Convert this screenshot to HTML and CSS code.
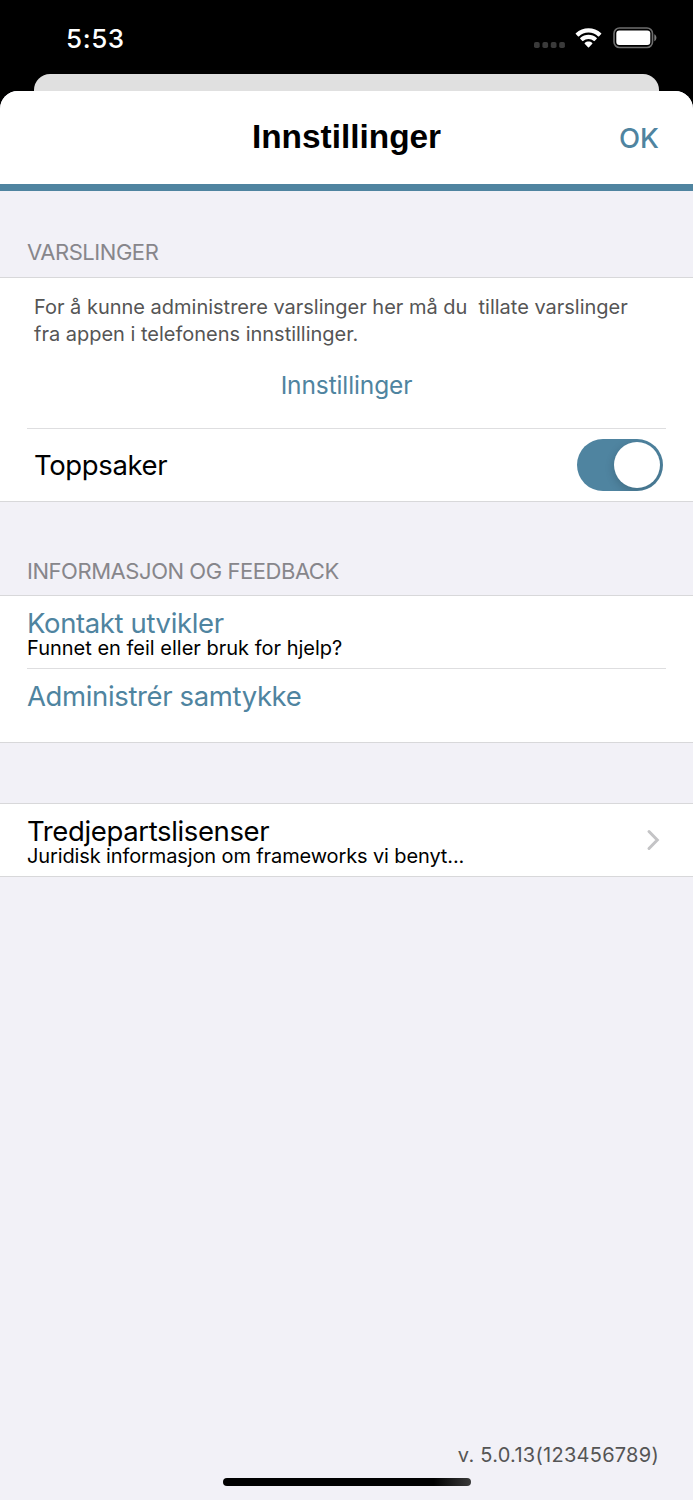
FILE: index.html
```html
<!DOCTYPE html>
<html lang="no">
<head>
    <meta charset="UTF-8">
    <meta name="viewport" content="width=device-width, initial-scale=1.0">
    <title>Innstillinger</title>
    <link rel="stylesheet" href="styles.css">
</head>
<body>
    <div class="status-bar">
        <span class="time">5:53</span>
        <div class="status-icons">
            <svg class="signal" width="32" height="6" viewBox="0 0 32 6" fill="#3a3a3a">
                <rect x="0" y="0" width="5.700" height="6" rx="1.800"/>
                <rect x="8.400" y="0" width="5.700" height="6" rx="1.800"/>
                <rect x="16.800" y="0" width="5.700" height="6" rx="1.800"/>
                <rect x="25.200" y="0" width="5.700" height="6" rx="1.800"/>
            </svg>
            <svg class="wifi" width="27" height="21" viewBox="0 0 27 21">
                <path fill="#fff" d="M13.5 4.6c3.700 0 7.100 1.400 9.700 3.800.2.200.5.200.7 0l2.300-2.300c.2-.2.200-.6 0-.8C19.200-1.300 7.800-1.300.8 5.300c-.2.200-.2.600 0 .8l2.300 2.300c.2.200.5.200.7 0C6.400 6 9.800 4.600 13.500 4.600z"/>
                <path fill="#fff" d="M13.500 11c2 0 3.900.7 5.400 2 .2.200.5.200.7 0l2.200-2.200c.2-.2.200-.6 0-.8-4.700-4.200-11.900-4.200-16.600 0-.2.200-.2.600 0 .8L7.400 13c.2.200.5.200.7 0 1.500-1.300 3.400-2 5.400-2z"/>
                <path fill="#fff" d="M17.300 15.700c.2-.2.200-.6 0-.8-2.200-1.900-5.400-1.900-7.600 0-.2.200-.2.600 0 .8l3.300 3.500c.3.300.7.300 1 0z"/>
            </svg>
            <svg class="battery" width="44" height="22" viewBox="0 0 44 22">
                <rect x="1" y="1" width="38.500" height="19.500" rx="5.500" fill="none" stroke="#6e6e6e" stroke-width="1.600"/>
                <rect x="3.300" y="3.500" width="34" height="14.500" rx="3" fill="#fff"/>
                <path d="M41.300 7.300c2.800 1.200 2.800 5.800 0 7z" fill="#7b7b7b"/>
            </svg>
        </div>
    </div>
    <div class="back-card"></div>
    <main class="sheet">
        <header class="nav">
            <span></span>
            <h1>Innstillinger</h1>
            <a class="done">OK</a>
        </header>

        <h2 class="group-title first">VARSLINGER</h2>
        <section class="group">
            <div class="notice">
                <p>For å kunne administrere varslinger her må du&nbsp; tillate varslinger<br>fra appen i telefonens innstillinger.</p>
                <a class="settings-link">Innstillinger</a>
            </div>
            <div class="row toggle-row">
                <span class="label">Toppsaker</span>
                <div class="switch"><div class="knob"></div></div>
            </div>
        </section>

        <h2 class="group-title second">INFORMASJON OG FEEDBACK</h2>
        <section class="group">
            <div class="row text-row">
                <a class="label link">Kontakt utvikler</a>
                <span class="sub">Funnet en feil eller bruk for hjelp?</span>
            </div>
            <div class="row text-row consent-row">
                <a class="label link">Administrér samtykke</a>
            </div>
        </section>

        <section class="group licenses">
            <div class="row license-row">
                <div class="text-row">
                    <span class="label">Tredjepartslisenser</span>
                    <span class="sub legal">Juridisk informasjon om frameworks vi benyt...</span>
                </div>
                <svg class="chevron" width="14" height="22" viewBox="0 0 14 22">
                    <path d="M3 2.500 L11.300 11 L3 19.500" fill="none" stroke="#c4c4c6" stroke-width="3" stroke-linecap="round"/>
                </svg>
            </div>
        </section>

        <footer>
            <span class="version">v. 5.0.13(123456789)</span>
            <div class="home-bar"></div>
        </footer>
    </main>
</body>
</html>
```
FILE: styles.css
```css
*{
    margin:0;
    padding:0;
    box-sizing:border-box;
}
body{
    display:flex;
    flex-direction:column;
    height:1500px;
    background-color:#000;
    font-family:Inter, "Liberation Sans", sans-serif;
    font-weight:400;
    white-space:nowrap;
    overflow:hidden;
}

/* status bar */
.status-bar{
    display:flex;
    justify-content:space-between;
    height:74px;
    padding:22px 36px 0 66px;
    color:#fff;
}
.time{
    font-size:26px;
    font-weight:500;
    line-height:33px;
    letter-spacing:0.6px;
}
.status-icons{
    display:flex;
    align-items:flex-start;
}
.signal{
    margin:20px 9px 0 0;
}
.wifi{
    margin:6px 11px 0 0;
}
.battery{
    margin-top:5px;
}

/* sheet */
.back-card{
    height:17px;
    margin:0 34px;
    border-radius:16px 16px 0 0;
    background-color:#e0e0e0;
}
.sheet{
    flex:1;
    display:flex;
    flex-direction:column;
    border-radius:18px 18px 0 0;
    background-color:#f2f1f7;
    overflow:hidden;
}
.nav{
    display:grid;
    grid-template-columns:1fr auto 1fr;
    height:100px;
    padding:0 34px;
    background-color:#fff;
    border-bottom:7px solid #4f84a0;
}
h1{
    font-family:"Liberation Sans", Arial, sans-serif;
    font-size:33.4px;
    line-height:38px;
    padding-top:27px;
}
.done{
    justify-self:end;
    padding-top:30px;
    font-size:27.5px;
    line-height:34px;
    font-weight:500;
    color:#4f84a0;
}
.group-title{
    padding-left:27px;
    font-size:22px;
    font-weight:400;
    line-height:28px;
    letter-spacing:-0.45px;
    color:#87868b;
}
.first{
    margin:47px 0 11px;
}
.second{
    margin:55px 0 10px;
}
.group{
    background-color:#fff;
    border-top:1px solid #d8d8da;
    border-bottom:1px solid #d8d8da;
}
.notice{
    height:150px;
    padding:16px 0 0 34px;
    color:#555;
}
.notice p{
    font-size:20px;
    line-height:27px;
    letter-spacing:-0.01px;
}
.settings-link{
    display:block;
    margin:22px 34px 0 0;
    text-align:center;
    font-size:24.5px;
    line-height:30px;
    letter-spacing:-0.12px;
    color:#4f84a0;
}
.row{
    margin:0 27px;
}
.row + .row,
.notice + .row{
    border-top:1px solid #dedee0;
}
.toggle-row{
    display:flex;
    justify-content:space-between;
    align-items:center;
    height:73px;
    padding:0 3px 0 7px;
}
.label{
    font-size:27.5px;
    line-height:28px;
    letter-spacing:-0.37px;
    color:#000;
}
.link{
    color:#4f84a0;
}
.sub{
    font-size:20px;
    line-height:22px;
    color:#000;
}
.legal{
    letter-spacing:-0.12px;
}
.switch{
    display:flex;
    justify-content:flex-end;
    width:86px;
    height:52px;
    padding:3px;
    border-radius:26px;
    background-color:#4f84a0;
    overflow:hidden;
}
.knob{
    width:46px;
    height:46px;
    border-radius:50%;
    background-color:#fff;
    box-shadow:0 3px 10px rgba(0,0,0,0.18);
}
.text-row{
    display:flex;
    flex-direction:column;
    height:72px;
    padding-top:13px;
}
.consent-row{
    height:74px;
}
.licenses{
    margin-top:60px;
}
.license-row{
    display:flex;
    justify-content:space-between;
    align-items:center;
    padding-right:6px;
}
footer{
    display:flex;
    flex-direction:column;
    align-items:center;
    margin-top:auto;
    padding-bottom:14px;
}
.version{
    align-self:flex-end;
    margin:0 34px 10px 0;
    font-size:20px;
    line-height:26px;
    letter-spacing:0.27px;
    color:#555;
}
.home-bar{
    width:248px;
    height:8px;
    border-radius:4px;
    background:linear-gradient(90deg, #000 85%, #3a3a3a);
}
```
